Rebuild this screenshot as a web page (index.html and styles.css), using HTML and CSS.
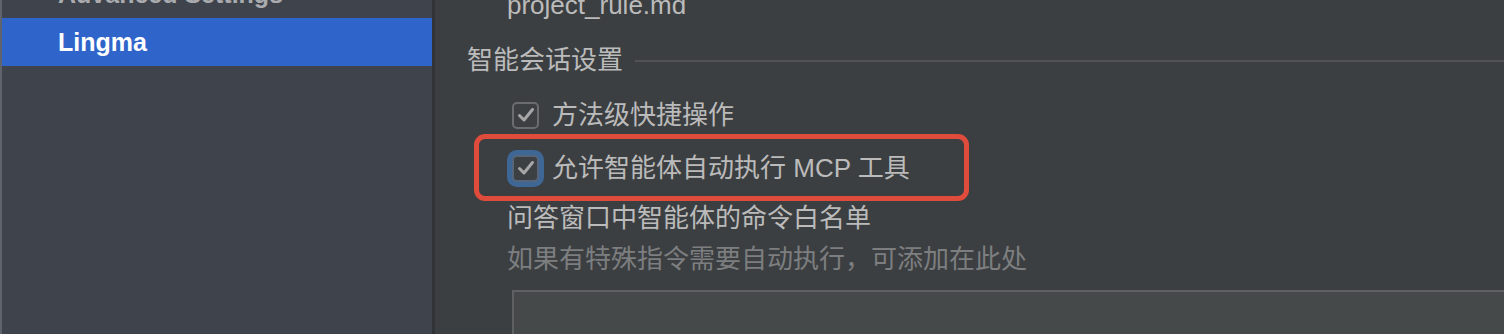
FILE: index.html
```html
<!DOCTYPE html>
<html lang="zh">
<head>
<meta charset="utf-8">
<link rel="stylesheet" href="styles.css">
</head>
<body>
<div class="app">
  <aside class="sidebar">
    <div class="nav-item nav-cut">Advanced Settings</div>
    <div class="nav-item nav-selected">Lingma</div>
  </aside>
  <main class="main">
    <div class="row row-file"><span class="txt">project_rule.md</span></div>
    <div class="row row-section">
      <span class="txt section-title">智能会话设置</span>
      <span class="section-line"></span>
    </div>
    <div class="row row-check">
      <span class="checkbox">
        <svg viewBox="0 0 26 26" width="26" height="26"><path d="M6.5 13.5 L11 18 L19.5 7.5" fill="none" stroke="#a6a6a6" stroke-width="3" stroke-linecap="round" stroke-linejoin="round"/></svg>
      </span>
      <span class="txt label">方法级快捷操作</span>
    </div>
    <div class="row row-check row-focus">
      <span class="checkbox checkbox-focus">
        <svg viewBox="0 0 26 26" width="26" height="26"><path d="M6.5 13.5 L11 18 L19.5 7.5" fill="none" stroke="#a6a6a6" stroke-width="3" stroke-linecap="round" stroke-linejoin="round"/></svg>
      </span>
      <span class="txt label">允许智能体自动执行 MCP 工具</span>
      <span class="highlight"></span>
    </div>
    <div class="row row-title"><span class="txt">问答窗口中智能体的命令白名单</span></div>
    <div class="row row-hint"><span class="txt hint">如果有特殊指令需要自动执行，可添加在此处</span></div>
    <div class="textarea"></div>
  </main>
</div>
</body>
</html>
```
FILE: styles.css
```css
* { box-sizing: border-box; }
html, body { margin: 0; padding: 0; }
body {
  width: 1504px;
  height: 334px;
  overflow: hidden;
  background: #3c3f41;
  font-family: "Liberation Sans", "Noto Sans CJK SC", sans-serif;
  color: #bbbbbb;
}
.app {
  display: flex;
  height: 334px;
}
.sidebar {
  width: 435px;
  flex: none;
  background: #3f434b;
  border-left: 2px solid #5f636b;
  border-right: 3px solid #313335;
  display: flex;
  flex-direction: column;
  overflow: hidden;
}
.nav-item {
  height: 48px;
  flex: none;
  display: flex;
  align-items: center;
  padding-left: 56px;
  font-size: 25px;
  font-weight: bold;
  line-height: 1;
}
.nav-cut {
  margin-top: -30px;
  color: #a9abae;
}
.nav-selected {
  background: #2f65ca;
  color: #ffffff;
  margin-right: -1px;
}
.main {
  flex: 1;
  display: flex;
  flex-direction: column;
  overflow: hidden;
}
.row {
  display: flex;
  align-items: center;
  flex: none;
}
.txt {
  font-size: 26px;
  line-height: 1;
  white-space: nowrap;
}
.row-file {
  height: 30px;
  margin-top: -10px;
  padding-left: 72px;
}
.row-section {
  height: 36px;
  margin-top: 22px;
  padding-left: 32px;
}
.section-line {
  flex: 1;
  height: 2px;
  background: #505254;
  margin-left: 12px;
  margin-top: 2px;
}
.row-check {
  height: 36px;
  padding-left: 77px;
}
.row-section + .row-check { margin-top: 19px; }
.row-focus {
  margin-top: 17px;
  position: relative;
}
.checkbox {
  width: 27px;
  height: 27px;
  flex: none;
  border: 2px solid #6b6c6d;
  border-radius: 5px;
  background: #3d4043;
  display: flex;
  align-items: center;
  justify-content: center;
}
.checkbox svg { display: block; flex: none; }
.checkbox-focus {
  border-color: #566579;
  box-shadow: 0 0 0 5px #3f6796;
}
.label {
  margin-left: 13px;
}
.highlight {
  position: absolute;
  left: 39px;
  top: -16px;
  width: 495px;
  height: 67px;
  border: 5px solid #e04c3b;
  border-radius: 11px;
  pointer-events: none;
}
.row-title {
  height: 36px;
  margin-top: 14px;
  padding-left: 72px;
}
.row-hint {
  height: 36px;
  margin-top: 5px;
  padding-left: 72px;
}
.hint { color: #7c7e80; }
.textarea {
  flex: 1;
  margin-top: 13px;
  margin-left: 77px;
  background: #45494a;
  border-top: 2px solid #5e6061;
  border-left: 2px solid #5e6061;
}
```
